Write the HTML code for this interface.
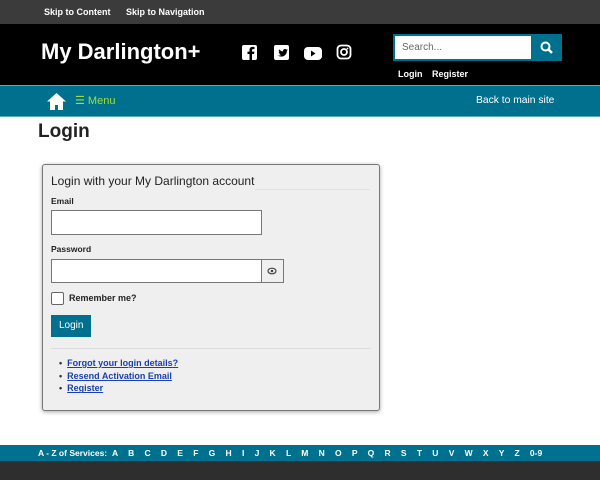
<!DOCTYPE html>
<html><head><style>
*{margin:0;padding:0;box-sizing:border-box}
body{width:600px;height:480px;overflow:hidden;font-family:"Liberation Sans",sans-serif;background:#fff;position:relative}
.a{position:absolute}
.b{font-weight:bold}
.l a{color:#1a3fb0;text-decoration:underline}
</style></head><body>
<div class="a" style="left:0;top:0;width:600px;height:24px;background:#3b3b3b"></div>
<div class="a b" style="left:44px;top:7px;font-size:9px;color:#fff">Skip to Content</div>
<div class="a b" style="left:126px;top:7px;font-size:9px;color:#fff">Skip to Navigation</div>
<div class="a" style="left:0;top:24px;width:600px;height:61px;background:#000"></div>
<div class="a b" style="left:41px;top:39px;font-size:22px;color:#fff">My Darlington+</div>
<svg class="a" style="left:242px;top:44px" width="116" height="16" viewBox="0 0 116 16">
<rect x="0" y="1" width="15" height="15" rx="2" fill="#fff"/><path d="M10 16V10h2l.4-2.4H10V6.3c0-.7.3-1.2 1.3-1.2h1.2V3c-.4 0-1.2-.1-2-.1-2 0-3 1.2-3 3.1v1.6H5.5V10H7.5v6z" fill="#000"/>
<rect x="32" y="1" width="15" height="15" rx="2" fill="#fff"/><path d="M35 11c1.2.8 3 .9 4.3-.1-1 0-1.600-.5-1.900-1.200h.8c-1-.3-1.5-1-1.5-2 .3.2.6.2.9.2-.9-.7-1-1.6-.5-2.5 1 1.2 2.4 1.9 3.9 2-.2-1.3.8-2.4 2-2.4.6 0 1.1.3 1.5.6.5-.1.9-.3 1.2-.5-.2.5-.5.8-.9 1.1l1.1-.3c-.3.4-.6.7-1 1 .1 3.4-3 6.2-6.3 5.6-1.2-.1-2.3-.5-3.600-1.500z" fill="#000"/>
<rect x="62" y="3" width="18" height="13" rx="4" fill="#fff"/><path d="M69 6.5v6l4.5-3z" fill="#000"/>
<rect x="95.5" y="1.5" width="13" height="13" rx="3.5" fill="none" stroke="#fff" stroke-width="1.8"/><circle cx="102" cy="8" r="3" fill="none" stroke="#fff" stroke-width="1.8"/><circle cx="105.5" cy="4.5" r=".9" fill="#fff"/>
</svg>
<div class="a" style="left:393px;top:34px;width:169px;height:27px;background:#00708f"></div>
<div class="a" style="left:395px;top:36px;width:136px;height:23px;background:#fff;font-size:10px;color:#666;padding:6px 0 0 7px">Search...</div>
<svg class="a" style="left:540px;top:41px" width="13" height="13" viewBox="0 0 13 13"><circle cx="5.5" cy="5.5" r="4" fill="none" stroke="#fff" stroke-width="2"/><path d="M8.5 8.5l3.5 3.5" stroke="#fff" stroke-width="2.4"/></svg>
<div class="a b" style="left:398px;top:69px;font-size:9px;color:#fff">Login</div>
<div class="a b" style="left:432px;top:69px;font-size:9px;color:#fff">Register</div>
<div class="a" style="left:0;top:85px;width:600px;height:32px;background:#00708f;border-top:1px solid #5aa9bd;border-bottom:1px solid #5aa9bd"></div>
<svg class="a" style="left:46px;top:92px" width="21" height="18" viewBox="0 0 21 18"><path d="M10.5 1L1 9.5h3V18h5v-5h3v5h5V9.5h3z" fill="#fff"/></svg>
<div class="a" style="left:75px;top:94px;font-size:11px;color:#9be03a">☰ Menu</div>
<div class="a" style="left:476px;top:95px;font-size:10.3px;color:#fff">Back to main site</div>
<div class="a b" style="left:38px;top:121px;font-size:19px;color:#222">Login</div>
<div class="a" style="left:42px;top:164px;width:338px;height:247px;background:#efefef;border:1.5px solid #777;border-radius:3px;box-shadow:0 1px 4px rgba(0,0,0,.35)"></div>
<div class="a" style="left:51px;top:174px;font-size:12px;color:#222">Login with your My Darlington account</div>
<div class="a" style="left:255px;top:189px;width:115px;height:1px;background:#e2e2e2"></div>
<div class="a b" style="left:51px;top:196px;font-size:8.5px;color:#222">Email</div>
<div class="a" style="left:51px;top:210px;width:211px;height:25px;background:#fff;border:1.5px solid #777"></div>
<div class="a b" style="left:51px;top:244px;font-size:8.5px;color:#222">Password</div>
<div class="a" style="left:51px;top:259px;width:211px;height:24px;background:#fff;border:1.5px solid #777"></div>
<div class="a" style="left:261px;top:259px;width:23px;height:24px;background:#efefef;border:1.5px solid #777"></div>
<svg class="a" style="left:267px;top:267px" width="10" height="8" viewBox="0 0 10 8"><ellipse cx="5" cy="4" rx="4" ry="2.8" fill="none" stroke="#444" stroke-width="1.2"/><circle cx="5" cy="4" r="1.3" fill="#444"/></svg>
<div class="a" style="left:51px;top:292px;width:13px;height:13px;background:#fff;border:1.5px solid #666;border-radius:2px"></div>
<div class="a b" style="left:69px;top:293px;font-size:9px;color:#222">Remember me?</div>
<div class="a" style="left:51px;top:315px;width:40px;height:22px;background:#00708f;color:#fff;font-size:10px;padding:5px 0 0 8px">Login</div>
<div class="a" style="left:51px;top:348px;width:320px;height:1px;background:#ddd"></div>
<div class="a b l" style="left:59px;top:357px;font-size:9px;line-height:12.7px;color:#333">
<div>•&nbsp; <a>Forgot your login details?</a></div><div>•&nbsp; <a>Resend Activation Email</a></div><div>•&nbsp; <a>Register</a></div></div>
<div class="a" style="left:0;top:445px;width:600px;height:16px;background:#00708f"></div>
<div class="a b" style="left:38px;top:448px;font-size:8.5px;color:#fff;white-space:nowrap">A - Z of Services:</div>
<div class="a b" style="left:112px;top:448px;font-size:8.5px;color:#fff;white-space:nowrap;word-spacing:7.9px">A B C D E F G H I J K L M N O P Q R S T U V W X Y Z 0-9</div>
<div class="a" style="left:0;top:461px;width:600px;height:19px;background:#2e2e2e"></div>
</body></html>
